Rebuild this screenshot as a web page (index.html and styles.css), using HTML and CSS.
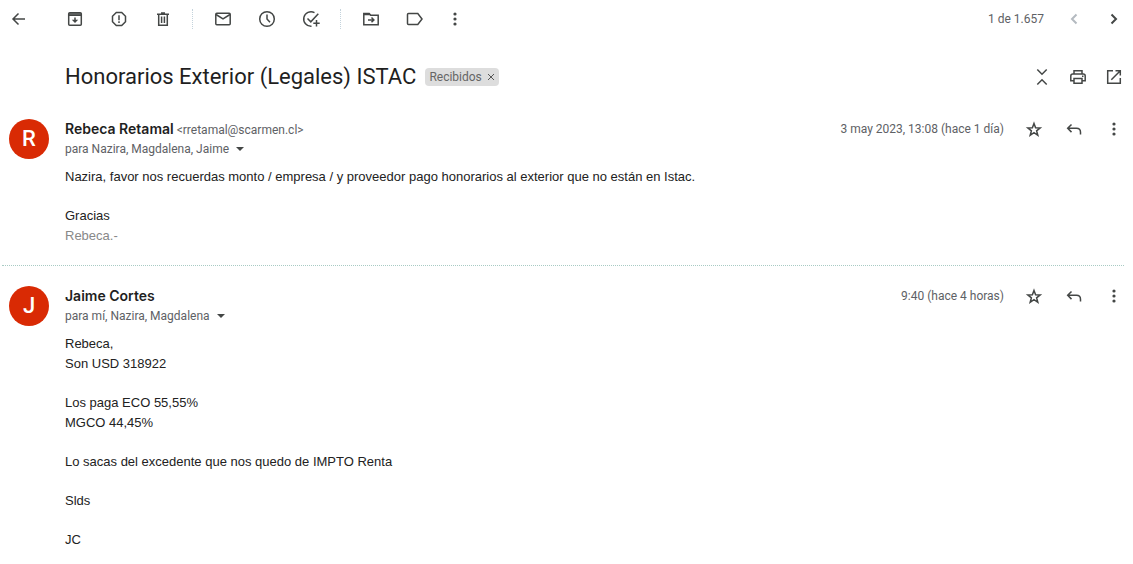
FILE: index.html
```
<!DOCTYPE html>
<html lang="es">

<head>
  <meta charset="UTF-8">
  <meta name="viewport" content="width=device-width, initial-scale=1.0">
  <title>Honorarios Exterior (Legales) ISTAC</title>
  <link rel="stylesheet" href="styles.css">
</head>

<body>
  <!-- shared icons -->
  <svg class="sprite" aria-hidden="true">
    <symbol id="star" viewBox="0 0 20 20">
      <path d="M10 4.4l1.6 4.3 4.6.2-3.6 2.9 1.2 4.5-3.8-2.6-3.8 2.6 1.2-4.5-3.6-2.9 4.6-.2z" />
    </symbol>
    <symbol id="reply" viewBox="0 0 20 20">
      <path d="M7.5 5.5L3.7 9.3l3.8 3.8M4 9.3h8.5q4 0 4 4v2.2" />
    </symbol>
    <symbol id="more" viewBox="0 0 20 20">
      <g class="fill">
        <circle cx="10" cy="5" r="1.6" />
        <circle cx="10" cy="10" r="1.6" />
        <circle cx="10" cy="15" r="1.6" />
      </g>
    </symbol>
  </svg>

  <header class="toolbar">
    <button class="icon back" aria-label="Volver"><svg viewBox="0 0 20 20"><path d="M16 10H4.5M9.5 4.5L4 10l5.5 5.5" /></svg></button>
    <div class="group">
      <button class="icon" aria-label="Archivar"><svg viewBox="0 0 20 20"><rect x="3.7" y="3.7" width="12.6" height="12.6" rx="1" /><path d="M3.7 6.3h12.6M10 8.5v4" /><path class="fill" d="M6.8 10.7h6.4L10 14z" /><path d="M4 5h12" /></svg></button>
      <button class="icon" aria-label="Marcar como spam"><svg viewBox="0 0 20 20"><path d="M7.3 3.5h5.4l3.8 3.8v5.4l-3.8 3.8H7.3l-3.8-3.8V7.3z" /><path d="M10 6.3v5M10 12.3v1.6" /></svg></button>
      <button class="icon" aria-label="Eliminar"><svg viewBox="0 0 20 20"><path d="M4 5.2h12M8 4h4M5.7 5.5v10.8h8.6V5.5M8.6 7.5v6.5M11.4 7.5v6.5" /></svg></button>
    </div>
    <div class="group">
      <button class="icon" aria-label="Marcar como no leído"><svg viewBox="0 0 20 20"><rect x="2.8" y="4.3" width="14.4" height="11.4" rx="1" /><path d="M3 5.5l7 4.3 7-4.3" /></svg></button>
      <button class="icon" aria-label="Posponer"><svg viewBox="0 0 20 20"><circle cx="10" cy="10" r="7.3" /><path d="M10 5.5V10l3 3.2" /></svg></button>
      <button class="icon" aria-label="Añadir a Tasks"><svg viewBox="0 0 20 20"><path d="M13.5 3.6A7.3 7.3 0 1 0 10.5 17.3M6.5 9.5l3.3 3.3 7.5-8M15.5 11v6.4M12.3 14.2h6.4" /></svg></button>
    </div>
    <div class="group">
      <button class="icon" aria-label="Mover a"><svg viewBox="0 0 20 20"><path d="M2.8 4.5h5.4l1.5 1.7h7.5v9.5H2.8z" /><path class="fill" d="M2.8 4.5h5.4l1.5 1.7H2.8z" /><path d="M7 10.9h5.5M10.5 8.5l2.4 2.4-2.4 2.4" /></svg></button>
      <button class="icon" aria-label="Etiquetas"><svg viewBox="0 0 20 20"><path d="M3.5 4.6h9.3L17 10l-4.2 5.4H3.5q-1 0-1-1V5.6q0-1 1-1z" /></svg></button>
      <button class="icon tight" aria-label="Más"><svg><use href="#more" /></svg></button>
    </div>
    <div class="pager">
      <span class="count">1 de 1.657</span>
      <button class="icon" aria-label="Más recientes" disabled><svg class="bold" viewBox="0 0 20 20"><path d="M12.5 5.5L8 10l4.5 4.5" /></svg></button>
      <button class="icon" aria-label="Anteriores"><svg class="bold" viewBox="0 0 20 20"><path d="M7.5 5.5L12 10l-4.5 4.5" /></svg></button>
    </div>
  </header>

  <main>
    <div class="subject">
      <h1>Honorarios Exterior (Legales) ISTAC</h1>
      <span class="label">Recibidos <button aria-label="Quitar etiqueta Recibidos"><svg viewBox="0 0 8 8"><path d="M1 1l6 6M7 1L1 7" /></svg></button></span>
      <div class="subject-actions">
        <button class="icon" aria-label="Contraer todo"><svg viewBox="0 0 20 20"><path d="M5.3 2.5L10 7.2l4.7-4.7M5.3 17.5l4.7-4.7 4.7 4.7" /></svg></button>
        <button class="icon" aria-label="Imprimir todo"><svg viewBox="0 0 20 20"><path d="M6 7V3.7h8V7M5.5 13.7H2.8V9q0-2 2-2h10.4q2 0 2 2v4.7h-2.7M6 11.5h8v4.8H6zM14 9.3h1.5" /></svg></button>
        <button class="icon" aria-label="En ventana nueva"><svg viewBox="0 0 20 20"><path d="M9 3.7H3.7v12.6h12.6V11M11.5 3.7h4.8v4.8M16.3 3.7l-9 9" /></svg></button>
      </div>
    </div>

    <article class="message">
      <div class="avatar">R</div>
      <div class="content">
        <div class="message-header">
          <div class="sender"><strong>Rebeca Retamal</strong> <span class="email">&lt;rretamal@scarmen.cl&gt;</span></div>
          <time class="date">3 may 2023, 13:08 (hace 1 día)</time>
          <button class="icon" aria-label="Destacar"><svg><use href="#star" /></svg></button>
          <button class="icon" aria-label="Responder"><svg><use href="#reply" /></svg></button>
          <button class="icon" aria-label="Más"><svg><use href="#more" /></svg></button>
        </div>
        <button class="recipients">para Nazira, Magdalena, Jaime <span class="caret"></span></button>
        <div class="message-body">
          <p>Nazira, favor nos recuerdas monto / empresa / y proveedor pago honorarios al exterior que no están en Istac.</p>
          <p>Gracias<br><span class="signature">Rebeca.-</span></p>
        </div>
      </div>
    </article>

    <article class="message">
      <div class="avatar">J</div>
      <div class="content">
        <div class="message-header">
          <div class="sender"><strong>Jaime Cortes</strong></div>
          <time class="date">9:40 (hace 4 horas)</time>
          <button class="icon" aria-label="Destacar"><svg><use href="#star" /></svg></button>
          <button class="icon" aria-label="Responder"><svg><use href="#reply" /></svg></button>
          <button class="icon" aria-label="Más"><svg><use href="#more" /></svg></button>
        </div>
        <button class="recipients">para mí, Nazira, Magdalena <span class="caret"></span></button>
        <div class="message-body">
          <p>Rebeca,<br>Son USD 318922</p>
          <p>Los paga ECO 55,55%<br>MGCO 44,45%</p>
          <p>Lo sacas del excedente que nos quedo de IMPTO Renta</p>
          <p>Slds</p>
          <p>JC</p>
        </div>
      </div>
    </article>
  </main>
</body>

</html>
```
FILE: styles.css
```
* {
  box-sizing: border-box;
}

body {
  margin: 0;
  background: #fff;
  color: #1f1f1f;
  font-family: "Google Sans", Roboto, sans-serif;
  font-size: 12px;
  line-height: 20px;
}

button {
  margin: 0;
  padding: 0;
  border: 0;
  background: none;
  color: inherit;
  font: inherit;
  cursor: pointer;
}

.sprite {
  display: none;
}

/* --- Icons --- */
.icon {
  flex: none;
  width: 20px;
  height: 20px;
  color: #444746;
}

.icon svg {
  display: block;
  width: 20px;
  height: 20px;
  fill: none;
  stroke: currentColor;
  stroke-width: 1.5;
}

.icon .bold {
  stroke-width: 2;
}

.icon:disabled {
  color: #b4bac0;
}

.fill {
  fill: currentColor;
  stroke: none;
}

/* --- Toolbar --- */
.toolbar {
  display: flex;
  align-items: center;
  height: 38px;
  padding: 0 9px;
}

.back {
  margin-right: 36px;
}

.group {
  display: flex;
  gap: 24px;
}

.group + .group {
  margin-left: 19px;
  padding-left: 20px;
  border-left: 1px dotted #c4d3dc;
}

.group .tight {
  margin-left: -4px;
}

.pager {
  display: flex;
  gap: 20px;
  margin-left: auto;
  color: #5e6165;
}

/* --- Subject --- */
.subject {
  display: flex;
  align-items: center;
  height: 40px;
  margin: 19px 9px 22px 65px;
}

h1 {
  margin: 0;
  font-size: 22px;
  font-weight: 400;
  line-height: 28px;
}

.label {
  display: flex;
  align-items: center;
  gap: 5px;
  height: 18px;
  margin-left: 9px;
  padding: 0 4px;
  border-radius: 4px;
  background: #dddddd;
  color: #666;
}

.label svg {
  display: block;
  width: 8px;
  height: 8px;
  stroke: #555;
}

.subject-actions {
  display: flex;
  gap: 16px;
  margin-left: auto;
}

/* --- Messages --- */
.message {
  display: flex;
  gap: 16px;
  margin: 0 9px 0 2px;
  padding: 0 0 19px 7px;
}

.message + .message {
  padding-top: 20px;
  border-top: 1px dotted #a8cbc4;
}

.avatar {
  flex: none;
  width: 40px;
  height: 40px;
  border-radius: 50%;
  background: #d92a04;
  color: #fff;
  font-size: 22px;
  font-weight: 500;
  line-height: 40px;
  text-align: center;
}

.content {
  flex: 1;
  min-width: 0;
}

.message-header {
  display: flex;
  gap: 20px;
  height: 20px;
}

.sender {
  flex: 1;
}

.sender strong {
  font-family: "Google Sans", Inter, sans-serif;
  font-size: 14px;
  font-weight: 600;
}

.email,
.date,
.recipients {
  color: #5e6165;
}

.recipients {
  display: flex;
  align-items: center;
  gap: 7px;
}

.caret {
  border: 4px solid transparent;
  border-top-color: #444746;
  border-bottom: 0;
}

.message-body {
  margin-top: 8px;
  color: #222;
  font-family: Arial, "Liberation Sans", sans-serif;
  font-size: 13px;
}

.message-body p {
  margin: 0 0 19px;
}

.message-body p:last-child {
  margin-bottom: 0;
}

.signature {
  color: #888;
}
```
